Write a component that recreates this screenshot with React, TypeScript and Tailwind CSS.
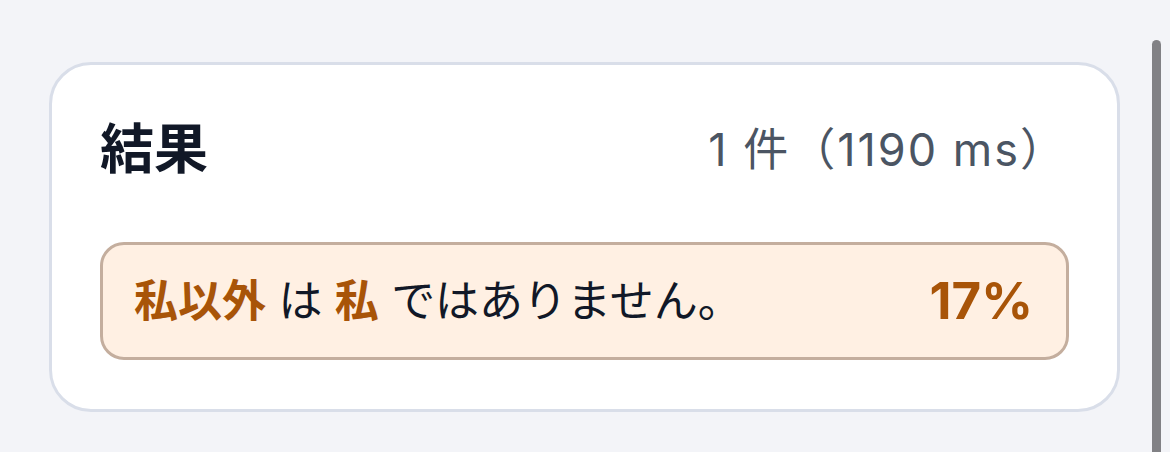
const font = "font-['Inter','Noto_Sans_CJK_JP',sans-serif]";

function ResultRow() {
  return (
    <div className="flex items-center justify-between rounded-[24px] border-[3px] border-[#c4ae9e] bg-[#fff0e3] pl-[31px] pr-[33px] py-[24px]">
      <p className="text-[44px] leading-[64px] text-[#111827]">
        <span className="font-bold text-[#a85408]">私以外</span> は{" "}
        <span className="font-bold text-[#a85408]">私</span> ではありません。
      </p>
      <span className="text-[51px] leading-[64px] font-bold text-[#a85408]">17%</span>
    </div>
  );
}

export default function App() {
  return (
    <div className={`relative h-[452px] w-[1170px] overflow-hidden bg-[#f3f4f8] ${font}`}>
      {/* scroll indicator */}
      <div className="absolute right-[9px] top-[40px] h-[430px] w-[9px] rounded-full bg-[#818185]" />

      <div className="pt-[62px] pl-[49px] pr-[50px]">
        <div className="rounded-[42px] border-[3px] border-[#d9dee9] bg-white px-[48px] pt-[43px] pb-[49px]">
          <div className="flex items-center justify-between">
            <h2 className="text-[54px] leading-[84px] font-bold text-[#111827]">結果</h2>
            <span className="pr-[2px] text-[45px] leading-[60px] tracking-[2px] text-[#4b5563]">1 件（1190 ms）</span>
          </div>
          <div className="mt-[50px]">
            <ResultRow />
          </div>
        </div>
      </div>
    </div>
  );
}
